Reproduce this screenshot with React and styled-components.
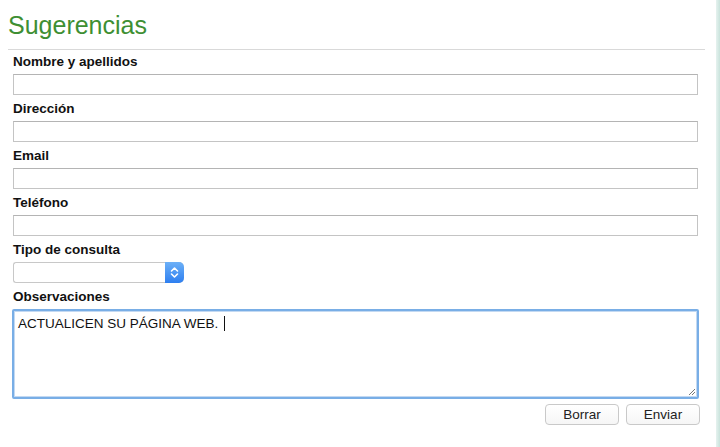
import styled, { createGlobalStyle } from "styled-components";

const GlobalStyle = createGlobalStyle`
  html, body {
    margin: 0;
    padding: 0;
    background: #fff;
  }
  body {
    font-family: "Liberation Sans", Arial, sans-serif;
    color: #111;
  }
`;

const Page = styled.div`
  display: flex;
  width: 720px;
  height: 447px;
  overflow: hidden;
`;

const Main = styled.main`
  flex: 1;
  padding: 0 0 0 8px;
`;

const Edge = styled.div`
  width: 4px;
  background: linear-gradient(to right, #e6f2ef, #c9e3dc);
`;

const Title = styled.h1`
  margin: 0;
  padding: 10px 0 0 0;
  height: 39px;
  font-size: 25px;
  line-height: 30px;
  font-weight: normal;
  color: #3e8f33;
  border-bottom: 1px solid #d9d9d9;
  width: 697px;
`;

const Form = styled.form`
  display: flex;
  flex-direction: column;
  padding: 4px 0 0 5px;
  width: 686px;
`;

const Field = styled.div`
  display: flex;
  flex-direction: column;
  gap: 4px;
  margin-bottom: ${(p) => p.$below ?? 6}px;
`;

const Label = styled.label`
  font-size: 13.5px;
  font-weight: bold;
  line-height: 16px;
`;

const TextInput = styled.input`
  box-sizing: border-box;
  width: 685px;
  height: 21px;
  margin: 0;
  border: 1px solid #c4c4c4;
  border-top-color: #b4b4b4;
  background: #fff;
  font: 13px "Liberation Sans", Arial, sans-serif;
  outline: none;
`;

const Select = styled.div`
  box-sizing: border-box;
  display: flex;
  width: 171px;
  height: 21px;
  border: 1px solid #c8c8c8;
  border-right: 0;
  border-radius: 3px 5px 5px 3px;
  background: #fff;
`;

const SelectValue = styled.div`
  flex: 1;
`;

const SelectArrow = styled.div`
  display: flex;
  align-items: center;
  justify-content: center;
  width: 19px;
  margin: -1px 0;
  border-radius: 0 5px 5px 0;
  background: linear-gradient(#6cb0f7, #2e7ff0);
`;

const AreaBox = styled.div`
  position: relative;
  box-sizing: border-box;
  width: 687px;
  height: 90px;
  margin-left: -1px;
  padding: 5px 4px;
  border: 2px solid #79aee6;
  border-radius: 2px;
  box-shadow: inset 0 0 0 1px #c3d9f2;
  font-size: 13.5px;
  line-height: 16px;
  color: #111;
`;

const Caret = styled.span`
  display: inline-block;
  width: 1px;
  height: 15px;
  margin-left: 6px;
  vertical-align: -3px;
  background: #111;
`;

const Grip = styled.svg`
  position: absolute;
  right: 1px;
  bottom: 1px;
`;

const Actions = styled.div`
  display: flex;
  justify-content: flex-end;
  gap: 7px;
  width: 687px;
`;

const Button = styled.button`
  box-sizing: border-box;
  width: 74px;
  height: 21px;
  border: 1px solid #c9c9c9;
  border-radius: 4px;
  background: linear-gradient(#ffffff, #f6f6f6);
  font: 13.5px "Liberation Sans", Arial, sans-serif;
  color: #222;
  padding: 0;
`;

const fields = ["Nombre y apellidos", "Dirección", "Email", "Teléfono"];

export default function App() {
  return (
    <Page>
      <GlobalStyle />
      <Main>
        <Title>Sugerencias</Title>
        <Form onSubmit={(e) => e.preventDefault()}>
          {fields.map((name) => (
            <Field key={name}>
              <Label>{name}</Label>
              <TextInput type="text" />
            </Field>
          ))}
          <Field>
            <Label>Tipo de consulta</Label>
            <Select>
              <SelectValue />
              <SelectArrow>
                <svg width="9" height="13" viewBox="0 0 9 13">
                  <path
                    d="M1.5 5 L4.5 2 L7.5 5 M1.5 8 L4.5 11 L7.5 8"
                    fill="none"
                    stroke="#fff"
                    strokeWidth="1.6"
                    strokeLinecap="round"
                    strokeLinejoin="round"
                  />
                </svg>
              </SelectArrow>
            </Select>
          </Field>
          <Field $below={5}>
            <Label>Observaciones</Label>
            <AreaBox>
              ACTUALICEN SU PÁGINA WEB.
              <Caret />
              <Grip width="9" height="9" viewBox="0 0 9 9">
                <path d="M8 2 L2 8 M8 5 L5 8" stroke="#777" strokeWidth="1" />
              </Grip>
            </AreaBox>
          </Field>
          <Actions>
            <Button type="reset">Borrar</Button>
            <Button type="submit">Enviar</Button>
          </Actions>
        </Form>
      </Main>
      <Edge />
    </Page>
  );
}
